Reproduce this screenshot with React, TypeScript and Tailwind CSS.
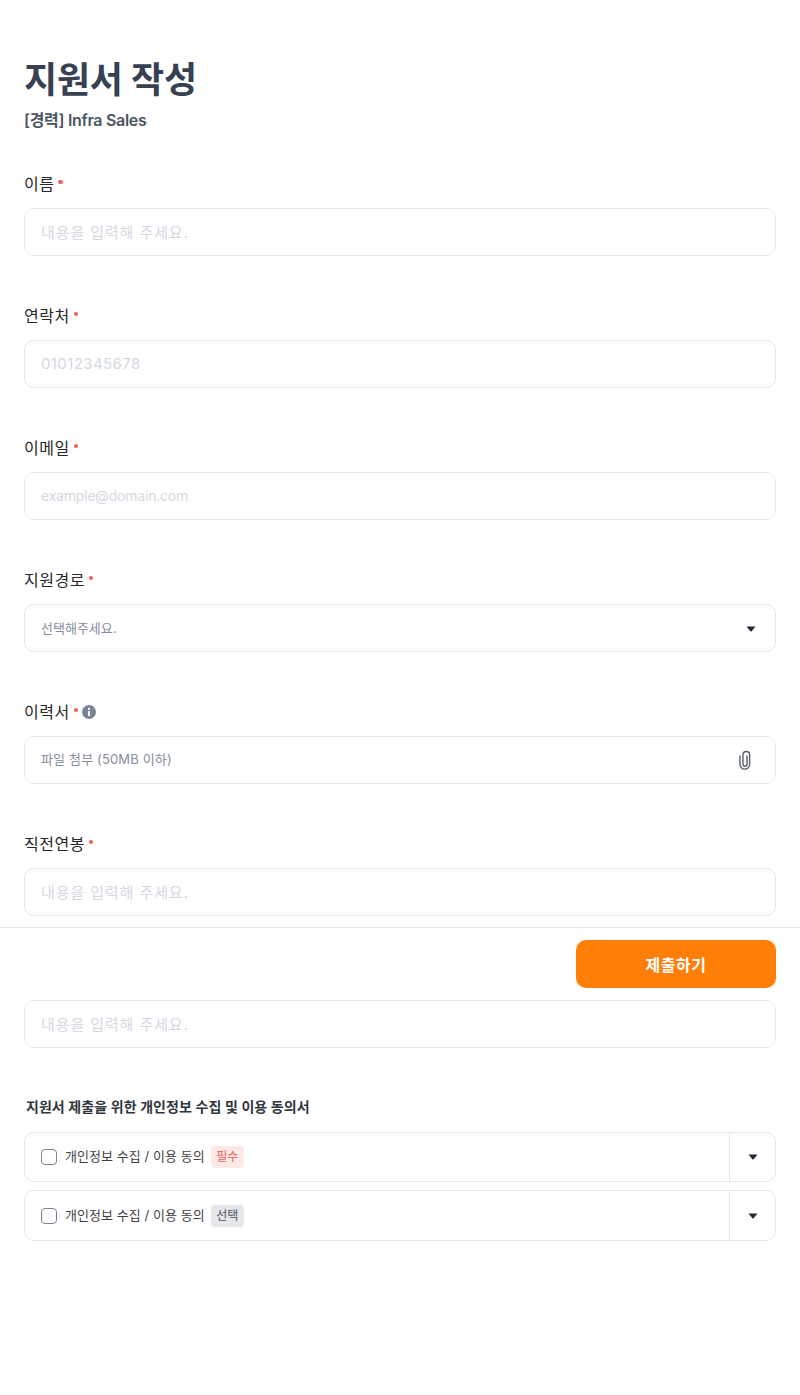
import React from "react";

const font = "font-['Inter','Noto_Sans_CJK_KR',sans-serif]";

function Caret() {
  return (
    <svg width="10" height="6" viewBox="0 0 10 6" className="block">
      <path d="M0.5 0.5h9L5.6 5.2a.8.8 0 0 1-1.2 0z" fill="#1f2937" />
    </svg>
  );
}

function Label({ text, info }: { text: string; info?: boolean }) {
  return (
    <div className="flex items-center h-6 mb-3">
      <span className="text-[16px] leading-6 tracking-[0.5px] text-[#27272a]">{text}</span>
      <span className="ml-[4px] mb-[4px] w-[4.5px] h-[4.5px] rounded-full bg-[#f25f5c]" />
      {info && (
        <svg width="14" height="14" viewBox="0 0 14 14" className="ml-[3.5px]">
          <circle cx="7" cy="7" r="7" fill="#7b8494" />
          <circle cx="7" cy="3.9" r="1.1" fill="#fff" />
          <rect x="6" y="6" width="2" height="5" rx="0.6" fill="#fff" />
        </svg>
      )}
    </div>
  );
}

function Box({ children }: { children: React.ReactNode }) {
  return (
    <div className="flex items-center justify-between h-12 px-4 rounded-[10px] border border-[#e5e7eb] bg-white">
      {children}
    </div>
  );
}

function Field({ label, placeholder, textClass }: { label: string; placeholder: string; textClass: string }) {
  return (
    <div className="mb-[48px]">
      <Label text={label} />
      <Box>
        <span className={`text-[#d5d9df] ${textClass}`}>{placeholder}</span>
      </Box>
    </div>
  );
}

function Consent({ tag, tagClass, h }: { tag: string; tagClass: string; h: string }) {
  return (
    <div className={`flex items-stretch rounded-[10px] border border-[#e5e7eb] ${h}`}>
      <div className="flex-1 flex items-center pl-4 gap-[8px]">
        <span className="w-4 h-4 rounded-[4px] border border-[#7b8494] bg-white" />
        <span className="text-[13px] tracking-[0.05px] text-[#3f3f46]">개인정보 수집 / 이용 동의</span>
        <span className={`flex items-center justify-center -ml-[2px] w-[33px] h-[22px] rounded-[4px] text-[12px] ${tagClass}`}>
          {tag}
        </span>
      </div>
      <div className="w-[46px] border-l border-[#e5e7eb] flex items-center justify-center">
        <Caret />
      </div>
    </div>
  );
}

export default function App() {
  const kr = "text-[15px] tracking-[0.9px] pt-[2px]";
  return (
    <div className={`relative w-[800px] h-[1395px] overflow-hidden bg-white ${font}`}>
      <div className="px-6 pt-[52px]">
        <h1 className="text-[36px] leading-[56px] font-bold text-[#374151] tracking-[-0.2px]">지원서 작성</h1>
        <p className="text-[16px] leading-6 font-semibold text-[#4b5563] tracking-[-0.3px] mb-[40px]">[경력] Infra Sales</p>

        <Field label="이름" placeholder="내용을 입력해 주세요." textClass={kr} />
        <Field label="연락처" placeholder="01012345678" textClass="text-[15px] tracking-[0.4px]" />
        <Field label="이메일" placeholder="example@domain.com" textClass="text-[14px] tracking-[-0.2px] pb-[2px]" />

        <div className="mb-[48px]">
          <Label text="지원경로" />
          <Box>
            <span className="text-[13px] pt-[1px] text-[#868e9c]">선택해주세요.</span>
            <span className="mr-[3px] pt-[1px]"><Caret /></span>
          </Box>
        </div>

        <div className="mb-[48px]">
          <Label text="이력서" info />
          <Box>
            <span className="text-[13px] tracking-[0.15px] text-[#868e9c]">파일 첨부 (50MB 이하)</span>
            <svg width="16" height="20" viewBox="0 0 16 20" fill="none" className="mr-[6px]">
              <path
                d="M10 6v8.3a2 2 0 0 1-4 0V4.8a3.3 3.3 0 0 1 6.6 0v9.5a4.8 4.8 0 0 1-9.6 0V6"
                stroke="#56606e"
                strokeWidth="1.4"
                strokeLinecap="round"
              />
            </svg>
          </Box>
        </div>

        <Field label="직전연봉" placeholder="내용을 입력해 주세요." textClass={kr} />
        <Field label="희망연봉" placeholder="내용을 입력해 주세요." textClass={kr} />

        <p className="mt-[49px] ml-[2px] text-[14px] leading-5 tracking-[0.05px] font-semibold text-[#2f3640] mb-[15px]">
          지원서 제출을 위한 개인정보 수집 및 이용 동의서
        </p>
        <div className="flex flex-col gap-2">
          <Consent h="h-[50px]" tag="필수" tagClass="bg-[#fee9e7] text-[#f0605a]" />
          <Consent h="h-[51px]" tag="선택" tagClass="bg-[#e5e7eb] text-[#4b5563]" />
        </div>
      </div>

      <div className="absolute left-0 right-0 top-[927px] border-t border-[#e5e7eb] bg-white px-6 py-3 flex justify-end">
        <button className="w-[200px] h-12 rounded-[10px] bg-[#ff7e08] text-white text-[16px] tracking-[0.5px] font-semibold pt-[2px]">
          제출하기
        </button>
      </div>
    </div>
  );
}
